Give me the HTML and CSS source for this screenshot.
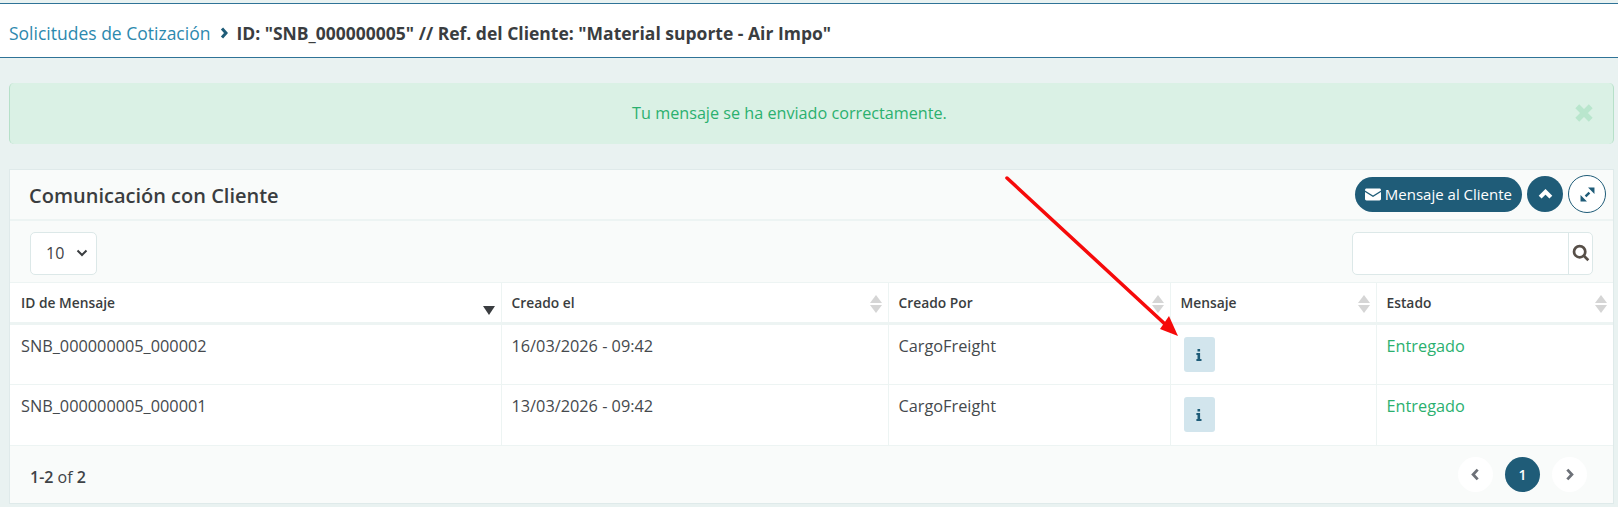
FILE: index.html
```html
<!DOCTYPE html>
<html lang="es">

<head>
    <meta charset="UTF-8">
    <title>Solicitudes de Cotización</title>
    <link rel="stylesheet" href="styles.css">
</head>

<body>
    <div class="topbar">
        <a class="crumb-link">Solicitudes de Cotización</a>
        <svg class="crumb-sep" viewBox="0 0 8 12"><path d="M2 1.500 6 6 2 10.500" /></svg>
        <span class="crumb-current">ID: "SNB_000000005" // Ref. del Cliente: "Material suporte - Air Impo"</span>
    </div>

    <div class="alert">
        <span>Tu mensaje se ha enviado correctamente.</span>
        <svg class="alert-close" viewBox="0 0 18 18"><path d="M3.500 3.500 14.500 14.500M14.500 3.500 3.500 14.500" /></svg>
    </div>

    <div class="card">
        <div class="card-header">
            <h2>Comunicación con Cliente</h2>
            <div class="card-actions">
                <button class="btn-pill">
                    <svg class="icon-mail" viewBox="0 0 16 12">
                        <path class="mail-body" d="M0 1.500C0 .7.7 0 1.500 0h13c.8 0 1.500.7 1.500 1.500V2L8 7 0 2zM0 3.600l8 5 8-5v7c0 .8-.7 1.400-1.500 1.400h-13C.7 12 0 11.400 0 10.600z" />
                    </svg>
                    Mensaje al Cliente
                </button>
                <button class="btn-round">
                    <svg viewBox="0 0 14 10"><path d="M2 7.500 7 2.500l5 5" /></svg>
                </button>
                <button class="btn-round btn-outline">
                    <svg viewBox="0 0 14 14">
                        <path d="M8.800 5.200 5.200 8.800" />
                        <path class="solid" d="M7.500 .5h6v6zM.5 7.500v6h6z" />
                    </svg>
                </button>
            </div>
        </div>

        <div class="toolbar">
            <div class="page-size">
                <span>10</span>
                <svg viewBox="0 0 12 8"><path d="M1.500 1.500 6 6l4.500-4.500" /></svg>
            </div>
            <div class="search">
                <div class="search-field"></div>
                <div class="search-btn">
                    <svg viewBox="0 0 16 16">
                        <circle cx="6.800" cy="6.800" r="5" />
                        <path d="M10.500 10.500 14.500 14.500" />
                    </svg>
                </div>
            </div>
        </div>

        <table class="grid">
            <colgroup>
                <col class="col-id">
                <col class="col-date">
                <col class="col-user">
                <col class="col-msg">
                <col class="col-state">
            </colgroup>
            <thead>
                <tr>
                    <th>ID de Mensaje<span class="sort-active"></span></th>
                    <th>Creado el<span class="sort"></span></th>
                    <th>Creado Por<span class="sort"></span></th>
                    <th>Mensaje<span class="sort"></span></th>
                    <th>Estado<span class="sort"></span></th>
                </tr>
            </thead>
            <tbody>
                <tr>
                    <td>SNB_000000005_000002</td>
                    <td>16/03/2026 - 09:42</td>
                    <td>CargoFreight</td>
                    <td>
                        <button class="btn-info">
                            <svg viewBox="0 0 6 12"><path d="M1.500 0h2.600v2.400H1.500zM.4 4h3.700v6H5.500v2H.4v-2h1.100V6H.4z" /></svg>
                        </button>
                    </td>
                    <td class="state-ok">Entregado</td>
                </tr>
                <tr>
                    <td>SNB_000000005_000001</td>
                    <td>13/03/2026 - 09:42</td>
                    <td>CargoFreight</td>
                    <td>
                        <button class="btn-info">
                            <svg viewBox="0 0 6 12"><path d="M1.500 0h2.600v2.400H1.500zM.4 4h3.700v6H5.500v2H.4v-2h1.100V6H.4z" /></svg>
                        </button>
                    </td>
                    <td class="state-ok">Entregado</td>
                </tr>
            </tbody>
        </table>

        <div class="card-footer">
            <div class="range"><b>1-2</b> of <b>2</b></div>
            <div class="pager">
                <span class="page-arrow"><svg viewBox="0 0 8 12"><path d="M6 1.500 1.800 6 6 10.500" /></svg></span>
                <span class="page-num">1</span>
                <span class="page-arrow"><svg viewBox="0 0 8 12"><path d="M2 1.500 6.200 6 2 10.500" /></svg></span>
            </div>
        </div>
    </div>

    <!-- flecha roja puesta encima de la captura -->
    <svg class="arrow" viewBox="0 0 1618 507">
        <path class="arrow-line" d="M1007 178 1166 325" />
        <path class="arrow-head" d="M1178 336 1160 329 1169 316z" />
    </svg>
</body>

</html>
```

FILE: styles.css
```css
* {
    box-sizing: border-box;
}

html,
body {
    height: 507px;
    overflow: hidden;
}

body {
    position: relative;
    margin: 0;
    padding-top: 3px;
    background-color: #e9f2f1;
    font-family: "Open Sans", Arial, sans-serif;
    font-size: 15px;
    color: #3f4347;
}

button {
    font-family: inherit;
    border: 0;
    padding: 0;
    cursor: pointer;
}

/* barra superior */
.topbar {
    display: flex;
    align-items: center;
    height: 55px;
    padding: 5px 0 0 9px;
    background-color: #fff;
    border-top: 1px solid #2f7397;
    border-bottom: 1px solid #2f7397;
}

.crumb-link {
    font-size: 17.500px;
    color: #2d89ae;
}

.crumb-sep {
    width: 8px;
    height: 12px;
    margin: 0 8px 0 10px;
    fill: none;
    stroke: #1f5c78;
    stroke-width: 3;
}

.crumb-current {
    font-size: 17.500px;
    font-weight: 700;
    color: #3a3d40;
}

/* aviso */
.alert {
    position: relative;
    display: flex;
    align-items: center;
    justify-content: center;
    height: 61px;
    margin: 25px 4px 0 9px;
    padding-bottom: 2px;
    background-color: #daf1e5;
    border-left: 1px solid #b6e0c9;
    border-right: 1px solid #b6e0c9;
    border-radius: 5px;
    font-size: 16.200px;
    color: #2bb06f;
}

.alert span {
    margin-right: 44px;
}

.alert-close {
    position: absolute;
    right: 18px;
    top: 19px;
    width: 22px;
    height: 22px;
    fill: none;
    stroke: #b9e6cd;
    stroke-width: 4.500;
}

/* tarjeta */
.card {
    margin: 25px 4px 0 9px;
    height: 335px;
    background-color: #f9fbfa;
    border: 1px solid #dfeaea;
}

.card-header {
    display: flex;
    align-items: center;
    justify-content: space-between;
    height: 51px;
    padding: 0 7px 1px 19px;
    border-bottom: 2px solid #edf4f3;
}

.card-header h2 {
    margin: 3px 0 0;
    font-size: 20px;
    font-weight: 600;
    color: #3a3d40;
}

.card-actions {
    display: flex;
    align-items: center;
    gap: 5px;
}

.btn-pill {
    display: flex;
    align-items: center;
    gap: 4px;
    height: 35px;
    padding: 0 10px;
    background-color: #1f5c78;
    border-radius: 18px;
    font-size: 15px;
    color: #fff;
}

.icon-mail {
    width: 16px;
    height: 13px;
}

.mail-body {
    fill: #fff;
}

.btn-round {
    display: flex;
    align-items: center;
    justify-content: center;
    width: 36px;
    height: 36px;
    background-color: #1f5c78;
    border-radius: 50%;
}

.btn-round svg {
    width: 15px;
    height: 11px;
    fill: none;
    stroke: #fff;
    stroke-width: 3.800;
}

.btn-outline {
    width: 38px;
    height: 38px;
    background-color: #fff;
    border: 1px solid #1f5c78;
}

.btn-outline svg {
    width: 15px;
    height: 15px;
    stroke: #1f5c78;
    stroke-width: 2.200;
}

.btn-outline .solid {
    fill: #1f5c78;
    stroke: none;
}

/* filtros */
.toolbar {
    display: flex;
    align-items: center;
    justify-content: space-between;
    height: 61px;
    padding: 3px 20px 0 20px;
}

.page-size {
    display: flex;
    align-items: center;
    justify-content: space-between;
    width: 67px;
    height: 43px;
    padding: 0 8px 0 15px;
    background-color: #fff;
    border: 1px solid #dce8e8;
    border-radius: 5px;
    font-size: 16px;
}

.page-size svg {
    width: 12px;
    height: 8px;
    fill: none;
    stroke: #3a3d40;
    stroke-width: 2;
}

.search {
    display: flex;
    width: 241px;
    height: 43px;
    background-color: #fff;
    border: 1px solid #dce8e8;
    border-radius: 5px;
}

.search-field {
    flex: 1;
}

.search-btn {
    display: flex;
    align-items: center;
    justify-content: center;
    width: 24px;
    border-left: 1px solid #dce8e8;
}

.search-btn svg {
    width: 18px;
    height: 18px;
    fill: none;
    stroke: #574f48;
    stroke-width: 2.400;
}

/* tabla */
.grid {
    width: 100%;
    table-layout: fixed;
    border-collapse: collapse;
    background-color: #fff;
}

.col-id {
    width: 491px;
}

.col-date {
    width: 387px;
}

.col-user {
    width: 282px;
}

.col-msg {
    width: 206px;
}

.grid th,
.grid td {
    text-align: left;
    vertical-align: top;
    border: 1px solid #edf4f3;
    border-width: 0 1px;
}

.grid th:first-child,
.grid td:first-child {
    border-left: 0;
}

.grid th:last-child,
.grid td:last-child {
    border-right: 0;
}

.grid th {
    position: relative;
    height: 41px;
    padding: 10px 10px 0;
    border-top: 1px solid #edf4f3;
    border-bottom: 3px solid #edf4f3;
    font-size: 13.800px;
    font-weight: 600;
    color: #3a3d40;
}

.grid td {
    height: 61px;
    padding: 10px 10px 0;
    border-bottom: 1px solid #edf4f3;
    font-size: 16.300px;
    color: #45494d;
}

.grid th:first-child,
.grid td:first-child {
    padding-left: 11px;
}

.sort,
.sort-active {
    position: absolute;
    right: 6px;
    top: 12px;
    width: 12px;
    height: 18px;
}

.sort::before,
.sort::after {
    content: "";
    position: absolute;
    left: 0;
    border-left: 6px solid transparent;
    border-right: 6px solid transparent;
}

.sort::before {
    top: 0;
    border-bottom: 8px solid #d5d5d5;
}

.sort::after {
    bottom: 0;
    border-top: 8px solid #d5d5d5;
}

.sort-active::after {
    content: "";
    position: absolute;
    left: 0;
    bottom: -2px;
    border-left: 6px solid transparent;
    border-right: 6px solid transparent;
    border-top: 9px solid #3a3d40;
}

.btn-info {
    display: flex;
    align-items: center;
    justify-content: center;
    width: 31px;
    height: 35px;
    margin: 2px 0 0 3px;
    background-color: #d2e5ed;
    border-radius: 3px;
}

.btn-info svg {
    width: 6px;
    height: 12px;
    fill: #1f5c78;
}

.grid .state-ok {
    font-size: 16.300px;
    color: #2bb06f;
}

/* pie */
.card-footer {
    display: flex;
    align-items: center;
    justify-content: space-between;
    height: 57px;
    padding: 0 26px 0 20px;
}

.range {
    margin-top: 5px;
    font-size: 16px;
    color: #3f4347;
}

.range b {
    font-weight: 600;
}

.pager {
    display: flex;
    align-items: center;
    gap: 12px;
}

.page-arrow,
.page-num {
    display: flex;
    align-items: center;
    justify-content: center;
    width: 35px;
    height: 35px;
    border-radius: 50%;
}

.page-arrow {
    background-color: #fff;
}

.page-arrow svg {
    width: 9px;
    height: 13px;
    fill: none;
    stroke: #6d7178;
    stroke-width: 2.600;
}

.page-num {
    background-color: #1f5c78;
    font-size: 14px;
    font-weight: 600;
    color: #fff;
}

.arrow {
    position: absolute;
    left: 0;
    top: 0;
    width: 1618px;
    height: 507px;
    pointer-events: none;
}

.arrow-line {
    fill: none;
    stroke: #f60a0a;
    stroke-width: 3.500;
    stroke-linecap: round;
}

.arrow-head {
    fill: #f60a0a;
}
```
